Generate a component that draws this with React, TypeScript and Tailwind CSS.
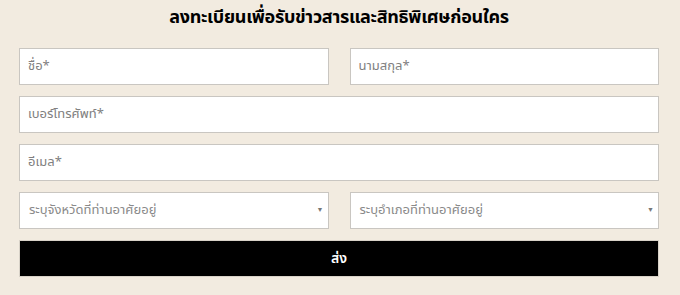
import React from "react";

const font = { fontFamily: '"Noto Sans Thai", "Noto Sans", "Liberation Sans", sans-serif' };

function Field({ ph, className = "" }: { ph: string; className?: string }) {
  return (
    <div className={`h-[37px] bg-white border border-[#c9c6c1] flex items-center px-[8px] text-[13px] text-[#808080] ${className}`}>
      {ph}
    </div>
  );
}

function Select({ ph }: { ph: string }) {
  return (
    <div className="flex-1 h-[37px] bg-white border border-[#c9c6c1] flex items-center justify-between pl-[9px] pr-[4px] text-[13px] text-[#8a8a8a]">
      <span>{ph}</span>
      <span className="text-[7px] text-[#777]">▼</span>
    </div>
  );
}

export default function App() {
  return (
    <div className="w-[680px] h-[295px] bg-[#f2ebe0] pl-[19px] pr-[21px]" style={font}>
      <h1 className="text-center font-bold text-[18px] tracking-[-0.3px] text-black h-[48px] pt-[4px] leading-[28px]">
        ลงทะเบียนเพื่อรับข่าวสารและสิทธิพิเศษก่อนใคร
      </h1>
      <div className="flex flex-col gap-[11px]">
        <div className="flex gap-[21px]">
          <Field ph="ชื่อ*" className="flex-1" />
          <Field ph="นามสกุล*" className="flex-1" />
        </div>
        <Field ph="เบอร์โทรศัพท์*" />
        <Field ph="อีเมล*" />
        <div className="flex gap-[21px]">
          <Select ph="ระบุจังหวัดที่ท่านอาศัยอยู่" />
          <Select ph="ระบุอำเภอที่ท่านอาศัยอยู่" />
        </div>
        <button className="h-[37px] bg-black border border-[#d8d2c8] text-white text-[14px] font-semibold">ส่ง</button>
      </div>
    </div>
  );
}
